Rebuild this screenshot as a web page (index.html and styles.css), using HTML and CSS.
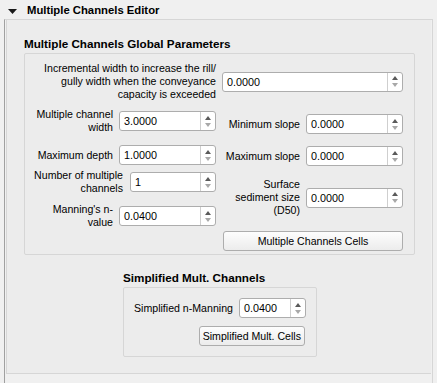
FILE: index.html
```html
<!DOCTYPE html>
<html>
<head>
<meta charset="utf-8">
<link rel="stylesheet" href="styles.css">
</head>
<body>
<div class="header">
  <svg class="tri" width="9" height="5" viewBox="0 0 9 5"><polygon points="0,0 9,0 4.5,5" fill="#1a1a1a"/></svg>
  <span class="title">Multiple Channels Editor</span>
</div>
<div class="editor">
  <div class="panel">
    <div class="gp">
      <div class="gtitle">Multiple Channels Global Parameters</div>
      <div class="gbox">
        <div class="row1">
          <div class="lbl l191">Incremental width to increase the rill/<br>gully width when the conveyance<br>capacity is exceeded</div>
          <div class="spin w181"><span class="val">0.0000</span><span class="arrows"><i class="up"></i><i class="dn"></i></span></div>
        </div>
        <div class="cols">
          <div class="lcol">
            <div class="frow r2">
              <div class="lbl">Multiple channel<br>width</div>
              <div class="spin w97"><span class="val">3.0000</span><span class="arrows"><i class="up"></i><i class="dn"></i></span></div>
            </div>
            <div class="frow r3">
              <div class="lbl">Maximum depth</div>
              <div class="spin w97"><span class="val">1.0000</span><span class="arrows"><i class="up"></i><i class="dn"></i></span></div>
            </div>
            <div class="frow r4">
              <div class="lbl">Number of multiple<br>channels</div>
              <div class="spin w86"><span class="val">1</span><span class="arrows"><i class="up"></i><i class="dn"></i></span></div>
            </div>
            <div class="frow r5">
              <div class="lbl">Manning's n-<br>value</div>
              <div class="spin w97"><span class="val">0.0400</span><span class="arrows"><i class="up"></i><i class="dn"></i></span></div>
            </div>
          </div>
          <div class="rcol">
            <div class="frow">
              <div class="lbl">Minimum slope</div>
              <div class="spin w97"><span class="val">0.0000</span><span class="arrows"><i class="up"></i><i class="dn"></i></span></div>
            </div>
            <div class="frow">
              <div class="lbl">Maximum slope</div>
              <div class="spin w97"><span class="val">0.0000</span><span class="arrows"><i class="up"></i><i class="dn"></i></span></div>
            </div>
            <div class="frow">
              <div class="lbl">Surface<br>sediment size<br>(D50)</div>
              <div class="spin w97"><span class="val">0.0000</span><span class="arrows"><i class="up"></i><i class="dn"></i></span></div>
            </div>
            <button class="btn wide">Multiple Channels Cells</button>
          </div>
        </div>
      </div>
    </div>
    <div class="sp">
      <div class="gtitle">Simplified Mult. Channels</div>
      <div class="sbox">
        <div class="frow srow">
          <div class="lbl">Simplified n-Manning</div>
          <div class="spin w67"><span class="val">0.0400</span><span class="arrows"><i class="up"></i><i class="dn"></i></span></div>
        </div>
        <div class="brow"><button class="btn">Simplified Mult. Cells</button></div>
      </div>
    </div>
  </div>
</div>
</body>
</html>
```
FILE: styles.css
```css
html, body {
  margin: 0;
  padding: 0;
  background: #f0f0f0;
  width: 437px;
  height: 383px;
  overflow: hidden;
  font-family: "Liberation Sans", Arial, sans-serif;
  font-size: 10.6px;
  color: #000;
}
.header {
  height: 19px;
  display: flex;
  align-items: center;
}
.tri {
  margin-left: 8px;
  margin-top: 3px;
  display: block;
}
.title {
  margin-left: 10px;
  font-weight: bold;
  font-size: 11.3px;
}
.editor {
  margin-left: 4px;
  width: 427px;
  height: 364px;
  border-left: 1px solid #a0a0a0;
  border-right: 1px solid #d6d6d6;
  border-top: 1px solid #d6d6d6;
}
.panel {
  margin-left: 1px;
  width: 424px;
  border-left: 1px solid #d6d6d6;
  border-bottom: 1px solid #d6d6d6;
  padding-bottom: 16px;
  background: #ececec;
}
.gp {
  padding-top: 17px;
  margin-left: 17px;
}
.gtitle {
  font-weight: bold;
  font-size: 11.7px;
  line-height: 14px;
  height: 14px;
  white-space: nowrap;
}
.gbox {
  margin-top: 2px;
  width: 389px;
  border: 1px solid #d6d6d6;
  border-radius: 2px;
  padding-bottom: 3px;
}
.lbl {
  text-align: right;
  line-height: 13px;
  white-space: nowrap;
}
.l191 {
  width: 191px;
}
.row1 {
  margin-top: 8px;
  display: flex;
  align-items: center;
  gap: 6px;
}
.cols {
  display: flex;
  gap: 6px;
}
.lcol {
  width: 191px;
  display: flex;
  flex-direction: column;
}
.rcol {
  width: 181px;
  display: flex;
  flex-direction: column;
  padding-top: 13px;
  gap: 12px;
}
.frow {
  display: flex;
  align-items: center;
  justify-content: flex-end;
  gap: 6px;
}
.r2 { margin-top: 7px; }
.r3 { margin-top: 11px; }
.r4 { margin-top: 4px; gap: 7px; }
.r5 { margin-top: 8px; }
.spin {
  box-sizing: border-box;
  height: 20px;
  display: flex;
  background: #fff;
  border: 1px solid #adadad;
  border-radius: 3px;
  flex: none;
}
.w181 { width: 181px; }
.w97 { width: 97px; }
.w86 { width: 86px; }
.w67 { width: 67px; }
.val {
  flex: 1;
  padding-left: 4px;
  line-height: 18px;
  font-size: 10.8px;
}
.arrows {
  width: 14px;
  border-left: 1px solid #cfcfcf;
  display: flex;
  flex-direction: column;
  align-items: center;
  justify-content: center;
  gap: 3px;
}
.up {
  display: block;
  width: 0;
  height: 0;
  border-left: 3.5px solid transparent;
  border-right: 3.5px solid transparent;
  border-bottom: 4px solid #5a5a5a;
}
.dn {
  display: block;
  width: 0;
  height: 0;
  border-left: 3.5px solid transparent;
  border-right: 3.5px solid transparent;
  border-top: 4px solid #a8a8a8;
}
.btn {
  box-sizing: border-box;
  height: 20px;
  padding: 0 3px;
  font-family: "Liberation Sans", Arial, sans-serif;
  font-size: 10.6px;
  color: #000;
  background: linear-gradient(#fdfdfd, #ececec);
  border: 1px solid #adadad;
  border-radius: 3px;
}
.wide {
  width: 180px;
  margin-top: 2px;
  margin-left: 1px;
}
.sp {
  margin-left: 116px;
  margin-top: 16px;
}
.sbox {
  margin-top: 2px;
  width: 171px;
  border: 1px solid #d6d6d6;
  border-radius: 2px;
  padding: 10px 11px 10px 10px;
}
.srow {
  justify-content: space-between;
}
.brow {
  margin-top: 8px;
  display: flex;
  justify-content: flex-end;
}
```
